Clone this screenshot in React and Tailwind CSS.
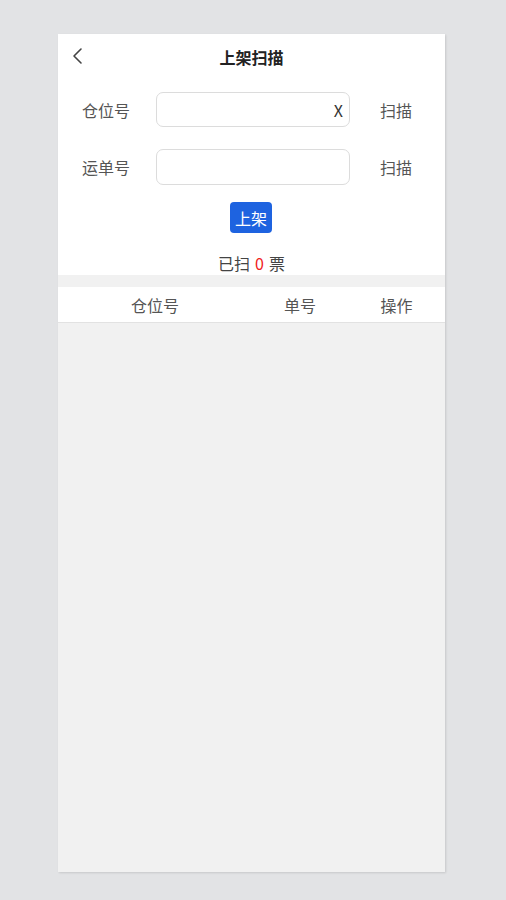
export default function App() {
  const font = { fontFamily: '"Noto Sans CJK SC", "Noto Sans", sans-serif' };
  return (
    <div className="w-[506px] h-[900px] bg-[#e2e3e5] pt-[34px]" style={font}>
      <div className="ml-[58px] w-[387px] h-[838px] bg-[#f1f1f1] flex flex-col shadow-[1px_1px_2px_rgba(0,0,0,0.12)]">
        <div className="bg-white flex flex-col">
          <div className="relative h-[46px] flex items-center justify-center">
            <svg className="absolute left-[13px] top-[13px]" width="14" height="18" viewBox="0 0 14 18" fill="none">
              <path d="M10 2 L3 9 L10 16" stroke="#444" strokeWidth="1.6" strokeLinecap="round" strokeLinejoin="round" />
            </svg>
            <span className="text-[16px] font-bold text-[#222]">上架扫描</span>
          </div>
          <div className="mt-[12px] flex items-center h-[35px]">
            <span className="ml-[24px] w-[74px] text-[16px] text-[#555]">仓位号</span>
            <div className="w-[194px] h-[35px] border border-[#dcdcdc] rounded-[7px] flex items-center justify-end pr-[6px]">
              <span className="text-[16px] text-[#333]">X</span>
            </div>
            <span className="flex-1 pr-[3px] text-center text-[16px] text-[#555]">扫描</span>
          </div>
          <div className="mt-[22px] flex items-center h-[36px]">
            <span className="ml-[24px] w-[74px] text-[16px] text-[#555]">运单号</span>
            <div className="w-[194px] h-[36px] border border-[#dcdcdc] rounded-[7px]"></div>
            <span className="flex-1 pr-[3px] text-center text-[16px] text-[#555]">扫描</span>
          </div>
          <div className="mt-[17px] flex justify-center">
            <div className="ml-[-1px] w-[42px] h-[31px] bg-[#1e63e0] rounded-[4px] flex items-center justify-center text-white text-[16px]">上架</div>
          </div>
          <div className="mt-[20px] h-[20px] flex items-center justify-center text-[16px] text-[#444] leading-none">
            <span>已扫</span>
            <span className="mx-[5px] text-[#f02020]">0</span>
            <span>票</span>
          </div>
          <div className="h-[2px]"></div>
        </div>
        <div className="h-[12px] bg-[#f1f1f1]"></div>
        <div className="bg-white h-[36px] flex items-center border-b border-[#e2e2e2] text-[16px] text-[#555]">
          <span className="w-[194px] text-center">仓位号</span>
          <span className="w-[96px] text-center">单号</span>
          <span className="w-[97px] text-center">操作</span>
        </div>
        <div className="flex-1"></div>
      </div>
    </div>
  );
}
